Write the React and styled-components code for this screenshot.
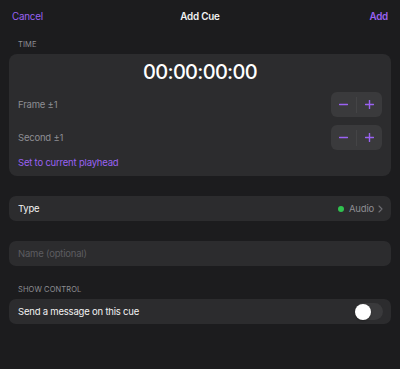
import React, { useState } from 'react';
import styled, { createGlobalStyle } from 'styled-components';

const PURPLE = '#9a62f2';

const GlobalStyle = createGlobalStyle`
  html, body {
    margin: 0;
    padding: 0;
    background: #1c1c1e;
  }
  body {
    font-family: Inter, "Noto Sans", sans-serif;
    -webkit-font-smoothing: antialiased;
    letter-spacing: -0.2px;
  }
`;

const Sheet = styled.div`
  width: 400px;
  height: 369px;
  background: #1c1c1e;
  color: #fff;
  overflow: hidden;
`;

const Header = styled.div`
  height: 32px;
  padding: 0 12px;
  display: grid;
  grid-template-columns: 1fr auto 1fr;
  align-items: center;
  font-size: 9.8px;
`;

const HeaderButton = styled.span`
  color: ${PURPLE};
  justify-self: ${p => (p.end ? 'end' : 'start')};
  font-weight: ${p => (p.bold ? 600 : 400)};
  cursor: pointer;
`;

const Title = styled.span`
  font-weight: 600;
  color: #f2f2f2;
`;

const SectionLabel = styled.div`
  padding: 0 18px;
  height: 12px;
  line-height: 12px;
  margin: ${p => p.top || 7}px 0 3px;
  font-size: 7.5px;
  letter-spacing: 0.1px;
  text-transform: uppercase;
  color: #8e8e93;
`;

const Card = styled.div`
  margin: 0 9px;
  background: #2c2c2e;
  border-radius: 8px;
  padding: 0 9px;
`;

const Timecode = styled.div`
  height: 37px;
  line-height: 37px;
  text-align: center;
  font-size: 20px;
  font-weight: 500;
  color: #fff;
  letter-spacing: -0.7px;
`;

const StepRow = styled.div`
  display: flex;
  align-items: center;
  justify-content: space-between;
  height: 25px;
  margin-top: ${p => p.gap}px;
`;

const RowLabel = styled.span`
  font-size: 9.5px;
  color: ${p => p.color || '#8e8e93'};
`;

const Stepper = styled.div`
  width: 51px;
  height: 25px;
  border-radius: 6px;
  background: #3a3a3c;
  display: flex;
  align-items: center;
`;

const StepButton = styled.button`
  flex: 1;
  height: 100%;
  border: none;
  background: transparent;
  padding: 0;
  display: flex;
  align-items: center;
  justify-content: center;
  cursor: pointer;
`;

const StepDivider = styled.div`
  width: 1px;
  height: 16px;
  background: #444446;
`;

const LinkRow = styled.div`
  height: 26px;
  line-height: 26px;
  font-size: 9.5px;
  color: ${PURPLE};
`;

const ListRow = styled.div`
  margin: ${p => p.top || 0}px 9px 0;
  height: 25px;
  border-radius: 7px;
  background: #2c2c2e;
  padding: 0 8px 0 9px;
  display: flex;
  align-items: center;
  justify-content: space-between;
`;

const Value = styled.div`
  display: flex;
  align-items: center;
  gap: 4px;
  color: #8e8e93;
  font-size: 9.5px;
`;

const Dot = styled.span`
  width: 6px;
  height: 6px;
  border-radius: 50%;
  background: #30c24f;
  margin-right: 1px;
`;

const NameInput = styled.input`
  flex: 1;
  border: none;
  background: transparent;
  outline: none;
  padding: 0;
  font: inherit;
  font-size: 9.5px;
  letter-spacing: -0.2px;
  color: #fff;
  &::placeholder {
    color: #5c5c60;
  }
`;

const Toggle = styled.button`
  width: 28px;
  height: 17px;
  border-radius: 9px;
  border: none;
  padding: 0;
  background: ${p => (p.on ? '#30c24f' : '#3a3a3c')};
  display: flex;
  align-items: center;
  justify-content: ${p => (p.on ? 'flex-end' : 'flex-start')};
  cursor: pointer;
`;

const Knob = styled.span`
  width: 16px;
  height: 16px;
  border-radius: 50%;
  background: #fff;
  box-shadow: 0 1px 2px rgba(0, 0, 0, 0.3);
`;

const Minus = () => (
  <svg width="9" height="9" viewBox="0 0 9 9">
    <path d="M0.5 4.5h8" stroke={PURPLE} strokeWidth="1.4" strokeLinecap="round" />
  </svg>
);

const Plus = () => (
  <svg width="9" height="9" viewBox="0 0 9 9">
    <path d="M0.5 4.5h8M4.5 0.5v8" stroke={PURPLE} strokeWidth="1.4" strokeLinecap="round" />
  </svg>
);

const Chevron = () => (
  <svg width="5" height="8" viewBox="0 0 5 8">
    <path d="M1 1l3 3-3 3" fill="none" stroke="#6e6e73" strokeWidth="1.1" strokeLinecap="round" strokeLinejoin="round" />
  </svg>
);

function StepperControl() {
  return (
    <Stepper>
      <StepButton aria-label="minus"><Minus /></StepButton>
      <StepDivider />
      <StepButton aria-label="plus"><Plus /></StepButton>
    </Stepper>
  );
}

export default function App() {
  const [sendMessage, setSendMessage] = useState(false);

  return (
    <Sheet>
      <GlobalStyle />
      <Header>
        <HeaderButton>Cancel</HeaderButton>
        <Title>Add Cue</Title>
        <HeaderButton end bold>Add</HeaderButton>
      </Header>

      <SectionLabel>Time</SectionLabel>
      <Card>
        <Timecode>00:00:00:00</Timecode>
        <StepRow gap={1}>
          <RowLabel>Frame ±1</RowLabel>
          <StepperControl />
        </StepRow>
        <StepRow gap={8}>
          <RowLabel>Second ±1</RowLabel>
          <StepperControl />
        </StepRow>
        <LinkRow>Set to current playhead</LinkRow>
      </Card>

      <ListRow top={20}>
        <RowLabel color="#f2f2f2">Type</RowLabel>
        <Value>
          <Dot />
          <span>Audio</span>
          <Chevron />
        </Value>
      </ListRow>

      <ListRow top={20}>
        <NameInput placeholder="Name (optional)" />
      </ListRow>

      <SectionLabel top={18}>Show Control</SectionLabel>
      <ListRow>
        <RowLabel color="#f2f2f2">Send a message on this cue</RowLabel>
        <Toggle on={sendMessage} onClick={() => setSendMessage(!sendMessage)}>
          <Knob />
        </Toggle>
      </ListRow>
    </Sheet>
  );
}
